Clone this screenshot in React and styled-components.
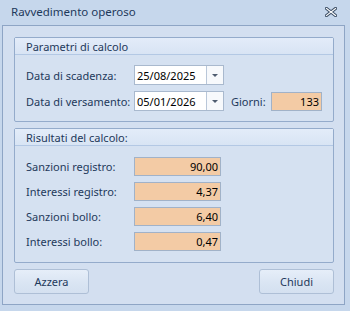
import React from "react";
import styled, { createGlobalStyle } from "styled-components";

const Global = createGlobalStyle`
  html, body { margin: 0; padding: 0; }
  body {
    background: #c6d7ec;
    font-family: "Noto Sans", "Open Sans", sans-serif;
    font-size: 11px;
    color: #1e395b;
  }
`;

const Window = styled.div`
  width: 350px;
  height: 311px;
  background: #c6d7ec;
  display: flex;
  flex-direction: column;
  box-sizing: border-box;
`;

const TitleBar = styled.div`
  height: 25px;
  display: flex;
  align-items: center;
  justify-content: space-between;
  padding: 0 13px 2px 11px;
  box-sizing: border-box;
  color: #1e395b;
  font-size: 11.5px;
`;

const Frame = styled.div`
  margin: 0 5px 0 2px;
  height: 280px;
  box-sizing: border-box;
  border: 1px solid #8ea5c5;
  background: #d3dff0;
  padding: 11px 10px 10px 11px;
  display: flex;
  flex-direction: column;
  gap: 6px;
`;

const Group = styled.div`
  border: 1px solid #94abcb;
  border-radius: 2px;
  background: #d5e1f1;
  box-sizing: border-box;
  height: ${(p) => p.$h}px;
  display: flex;
  flex-direction: column;
`;

const GroupHeader = styled.div`
  height: 16px;
  border-bottom: 1px solid #b3c8e4;
  background: linear-gradient(#e3ecf9, #d8e4f4);
  padding-left: 11px;
  display: flex;
  align-items: center;
  color: #1e395b;
`;

const GroupBody = styled.div`
  padding: ${(p) => p.$pt}px 11px 0 11px;
  display: flex;
  flex-direction: column;
  gap: 6px;
`;

const Row = styled.div`
  display: grid;
  grid-template-columns: 108px auto 47px auto 1fr;
  align-items: center;
  height: ${(p) => p.$h}px;
`;

const Label = styled.span`
  color: #1e395b;
  white-space: nowrap;
  padding-left: ${(p) => p.$pl || 0}px;
`;

const Combo = styled.div`
  width: 90px;
  height: 20px;
  box-sizing: border-box;
  border: 1px solid #a9b9ce;
  background: #fff;
  display: flex;
`;

const ComboText = styled.div`
  flex: 1;
  padding-left: 2px;
  display: flex;
  align-items: center;
  color: #000;
`;

const ComboButton = styled.div`
  width: 16px;
  border-left: 1px solid #b9c7d9;
  background: #f7f9fc;
  display: flex;
  align-items: center;
  justify-content: center;
`;

const Arrow = styled.div`
  width: 0;
  height: 0;
  border-left: 3px solid transparent;
  border-right: 3px solid transparent;
  border-top: 3px solid #4f5d70;
  margin-top: 1px;
`;

const ValueBox = styled.div`
  width: ${(p) => p.$w}px;
  height: ${(p) => p.$h}px;
  box-sizing: border-box;
  border: 1px solid #a1b2c8;
  background: #f3cba5;
  color: #000;
  display: flex;
  align-items: center;
  justify-content: flex-end;
  padding-right: 2px;
`;

const Buttons = styled.div`
  display: flex;
  justify-content: space-between;
`;

const Button = styled.div`
  width: 75px;
  height: 25px;
  box-sizing: border-box;
  border: 1px solid #aebfd6;
  border-radius: 3px;
  background: linear-gradient(#e6eef9, #dae5f3 55%, #d4e0f0);
  display: flex;
  align-items: center;
  justify-content: center;
  color: #1e395b;
`;

const CloseIcon = () => (
  <svg width="12" height="10" viewBox="0 0 12 10">
    <path d="M1.5 1.5 L10.5 8.5 M10.5 1.5 L1.5 8.5" stroke="#3d4f66" strokeWidth="3.2" strokeLinecap="square" />
    <path d="M1.5 1.5 L10.5 8.5 M10.5 1.5 L1.5 8.5" stroke="#ffffff" strokeWidth="1.2" strokeLinecap="square" />
  </svg>
);

const DateField = ({ value }) => (
  <Combo>
    <ComboText>{value}</ComboText>
    <ComboButton>
      <Arrow />
    </ComboButton>
  </Combo>
);

const results = [
  ["Sanzioni registro:", "90,00"],
  ["Interessi registro:", "4,37"],
  ["Sanzioni bollo:", "6,40"],
  ["Interessi bollo:", "0,47"],
];

export default function App() {
  return (
    <>
      <Global />
      <Window>
        <TitleBar>
          <span>Ravvedimento operoso</span>
          <CloseIcon />
        </TitleBar>
        <Frame>
          <Group $h={85}>
            <GroupHeader>Parametri di calcolo</GroupHeader>
            <GroupBody $pt={10}>
              <Row $h={20}>
                <Label>Data di scadenza:</Label>
                <DateField value="25/08/2025" />
              </Row>
              <Row $h={20}>
                <Label>Data di versamento:</Label>
                <DateField value="05/01/2026" />
                <Label $pl={7}>Giorni:</Label>
                <ValueBox $w={51} $h={19}>133</ValueBox>
              </Row>
            </GroupBody>
          </Group>
          <Group $h={135}>
            <GroupHeader>Risultati del calcolo:</GroupHeader>
            <GroupBody $pt={11}>
              {results.map(([l, v]) => (
                <Row key={l} $h={19}>
                  <Label>{l}</Label>
                  <ValueBox $w={87} $h={19}>{v}</ValueBox>
                </Row>
              ))}
            </GroupBody>
          </Group>
          <Buttons>
            <Button>Azzera</Button>
            <Button>Chiudi</Button>
          </Buttons>
        </Frame>
      </Window>
    </>
  );
}
